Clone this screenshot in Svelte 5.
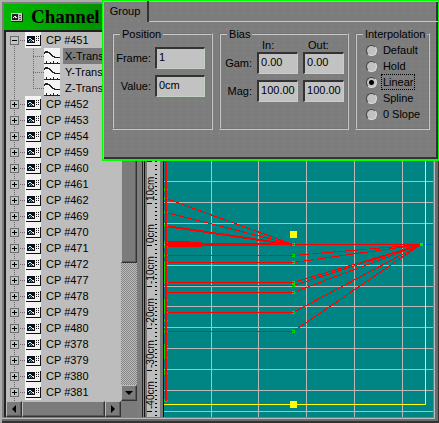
<script>
  const channels = [451, 452, 453, 454, 459, 460, 461, 462, 469, 470, 471, 472, 477, 478, 479, 480, 378, 379, 380, 381];
  const curves = ['X-Trans', 'Y-Trans', 'Z-Trans'];
  const modes = ['Default', 'Hold', 'Linear', 'Spline', '0 Slope'];
  let mode = $state('Linear');
  let frame = $state('1');
  let value = $state('0cm');
  let gamIn = $state('0.00');
  let gamOut = $state('0.00');
  let magIn = $state('100.00');
  let magOut = $state('100.00');

  const gridX = [211, 258, 306, 354, 402];
  const gridY = [160, 181, 202, 223, 244, 265, 286, 306, 327, 348, 369, 390, 411];
  const falling = [198, 212, 225];
  const levels = [255, 262, 282, 285, 292, 312, 331];
  const keys = [189, 198, 212, 225, 242, 246, 255, 262, 282, 300, 312, 320, 331, 345, 350, 357, 373, 400];
  const marks = [
    { y: 161, text: '' },
    { y: 203, text: '10cm' },
    { y: 245, text: '0cm' },
    { y: 286, text: '-10cm' },
    { y: 328, text: '-20cm' },
    { y: 370, text: '-30cm' },
    { y: 411, text: '-40cm' }
  ];
  const ticks = Array.from({ length: 62 }, (_, i) => Math.round(161 + i * 4.17));
</script>

{#snippet chanIcon()}
  <svg class="chan" width="16" height="16" viewBox="0 0 16 16" shape-rendering="crispEdges" aria-hidden="true">
    <rect width="16" height="16" fill="#f4f4f4" />
    <path d="M1 13h14V3h1v11H1z" fill="#111" />
    <rect x="2" y="4" width="8" height="7" fill="#111" />
    <path d="M3 7h1V6h2v1h1v1h2v1H7V8H6V7H4v1H3z" fill="#eee" />
    <path d="M4 9h1v1H4zM8 9h1v1H8z" fill="#e6dc50" />
    <path d="M5 8h1v1H5z" fill="#2ad" /><path d="M6 9h1v1H6z" fill="#d55" />
    <path d="M11 4h1v1h-1zM11 6h1v1h-1zM11 8h1v1h-1zM13 4h1v1h-1zM13 6h1v1h-1zM13 8h1v1h-1z" fill="#111" />
  </svg>
{/snippet}

<main class="app">
  <section class="side">
    <header>
      <svg width="12" height="9" viewBox="0 0 12 9" shape-rendering="crispEdges" aria-hidden="true">
        <rect width="12" height="9" fill="#c9c9c9" />
        <path d="M0 8h11V0h1v9H0z" fill="#222" />
        <rect x="1" y="1" width="6" height="6" fill="#222" />
        <path d="M2 4h1V3h2v1h1v1H4V4H3v1H2z" fill="#eee" />
        <path d="M8 2h2v1H8zM8 4h2v1H8zM8 6h2v1H8z" fill="#555" />
      </svg>
      <h1>Channel</h1>
    </header>
    <div class="well">
      <div class="upper">
        <ul class="tree">
          {#each channels as ch, i}
            <li>
              <div class="row">
                <button class="toggle" class:open={i === 0} aria-label={i === 0 ? 'Collapse' : 'Expand'}></button>
                <span class="stub"></span>
                {@render chanIcon()}
                <span class="name">CP #{ch}</span>
              </div>
              {#if i === 0}
                <ul class="kids">
                  {#each curves as c, j}
                    <li class="row" class:last={j === 2}>
                      <span class="branch"></span>
                      <svg width="16" height="16" viewBox="0 0 16 16" shape-rendering="crispEdges" aria-hidden="true">
                        <rect width="16" height="16" fill="#f4f4f4" />
                        <path d="M0 4h1V3h3v1h2v1h1v1h1v1h1v1h2v1h5v1h-6v-1H8v-1H7V7H6V6H5V5H1v1H0z" fill="#222" />
                        <path d="M0 15h16v1H0zM2 13h1v2H2zM6 14h1v1H6zM9 13h1v2H9zM13 14h1v1h-1z" fill="#222" />
                      </svg>
                      <span class="name" class:sel={j === 0}>{c}</span>
                    </li>
                  {/each}
                </ul>
              {/if}
            </li>
          {/each}
        </ul>
        <div class="vbar">
          <div class="thumb"></div>
          <div class="track"></div>
          <button aria-label="Scroll down"><svg width="8" height="4" viewBox="0 0 8 4"><path d="M0 0h8L4 4z" /></svg></button>
        </div>
      </div>
      <div class="hbar">
        <button aria-label="Scroll left"><svg width="4" height="8" viewBox="0 0 4 8"><path d="M4 0v8L0 4z" /></svg></button>
        <div class="thumb"></div>
        <button aria-label="Scroll right"><svg width="4" height="8" viewBox="0 0 4 8"><path d="M0 0v8l4-4z" /></svg></button>
        <div class="corner"></div>
      </div>
    </div>
  </section>

  <section class="graph">
    <svg class="ruler" width="11" viewBox="147 4 11 413" preserveAspectRatio="xMinYMin slice">
      {#each ticks as t}<rect x="155" y={t} width="2" height="1" />{/each}
      {#each marks as m}
        <rect x="147" y={m.y} width="5" height="1" />
        {#if m.text}<text transform="translate(154 {m.y - 2}) rotate(-90)">{m.text}</text>{/if}
      {/each}
    </svg>
    <svg class="plot" viewBox="164 4 269 413" preserveAspectRatio="xMinYMin slice" shape-rendering="crispEdges">
      {#each gridX as x}<rect {x} y="4" width="1" height="413" fill="#b9b9b9" />{/each}
      {#each gridY as y}<rect x="164" {y} width="269" height="1" fill="#b9b9b9" />{/each}
      <rect x="421" y="244" width="12" height="1" fill="#0060a8" />
      <path d="M425 4h1v401H164v-1h261z" fill="#ff0" />
      <g stroke="red" fill="none">
        {#each falling as y}<path d="M166 {y}.5L293 244.5" />{/each}
        <path d="M166 226.5L293 245.5" />
        {#each levels as y}<path d="M293 {y}.5L421 244.5" />{/each}
      </g>
      {#each levels as y}<rect x="166" {y} width="128" height="1" fill="red" />{/each}
      <rect x="166" y="244" width="255" height="1" fill="red" />
      <path d="M166 241h24v1h12v1h72v2h-16v1h-56v1h-36z" fill="red" />
      {#each keys as y}<path d="M164 {y - 1}h3v1h1v1h-1v1h-3z" fill="#0d0" />{/each}
      <path d="M164 300h1v14h-1zM164 347h1v12h-1zM164 370h1v4h-1zM164 262h1v22h-1z" fill="#0d0" />
      <rect x="165" y="4" width="2" height="397" fill="red" />
      {#each [244, ...levels] as y}
        <path d="M292 {y - 1}h3v3h-3z" fill="#0d0" /><path d="M292 {y}h2v1h-2z" fill="red" />
      {/each}
      <rect x="420" y="243" width="3" height="3" fill="#0e0" />
      <rect x="290" y="231" width="7" height="7" fill="#ff0" />
      <rect x="290" y="401" width="7" height="7" fill="#ff0" />
    </svg>
  </section>

  <section class="panel">
    <div class="tabs"><button class="tab">Group</button><span class="rest"></span></div>
    <form class="groups">
      <fieldset class="position">
        <legend>Position</legend>
        <div class="fields">
          <label for="frame">Frame:</label><input id="frame" bind:value={frame} />
          <label for="value">Value:</label><input id="value" bind:value />
        </div>
      </fieldset>
      <fieldset class="bias">
        <legend>Bias</legend>
        <div class="matrix">
          <span></span><span class="head">In:</span><span class="head">Out:</span>
          <label for="gam">Gam:</label><input id="gam" bind:value={gamIn} /><input aria-label="Gam out" bind:value={gamOut} />
          <label for="mag">Mag:</label><input id="mag" bind:value={magIn} /><input aria-label="Mag out" bind:value={magOut} />
        </div>
      </fieldset>
      <fieldset class="interp">
        <legend>Interpolation</legend>
        {#each modes as m}
          <label class="radio"><input type="radio" name="mode" value={m} bind:group={mode} /><span class:focus={mode === m}>{m}</span></label>
        {/each}
      </fieldset>
    </form>
  </section>
</main>

<style>
  :global(body) { background: #7d7d7d; }
  .app, .app * { box-sizing: border-box; }
  .app {
    position: relative;
    display: flex;
    min-height: 100vh;
    padding: 4px 6px 6px 4px;
    font: 11px/16px "Liberation Sans", Arial, sans-serif;
    color: #000;
    background: #7d7d7d;
    box-shadow: inset 2px 2px #a9afa9, inset -1px -2px #333, inset -4px -4px #6b6b6b, inset -5px -5px #bbb;
    overflow: hidden;
  }
  button { font: inherit; color: inherit; padding: 0; margin: 0; border: 0; border-radius: 0; display: grid; place-items: center; }
  ul { list-style: none; margin: 0; padding: 0; }
  svg { flex: none; display: block; }
  .side { width: 138px; flex: none; display: flex; flex-direction: column; }
  header { display: flex; align-items: center; height: 26px; padding-left: 7px; background: linear-gradient(90deg, #00b800, #009000 100px); }
  h1 { margin: 0 0 0 8px; font: bold 19px/26px "Liberation Serif", serif; }
  .well { flex: 1; display: flex; flex-direction: column; margin-right: 5px; border: 2px solid #222; border-width: 2px 0 0 2px; background: #bdbdbd; }
  .upper { display: flex; flex: 1; }
  .tree { flex: 1; overflow: hidden; background: repeating-linear-gradient(0deg, #6c6c6c 0 1px, transparent 1px 2px) 8px 8px / 1px 100% no-repeat; }
  .row { display: flex; align-items: center; height: 16px; padding-left: 4px; }
  .toggle { width: 9px; height: 9px; border: 1px solid #6c6c6c; background: linear-gradient(#000, #000) 50% / 5px 1px no-repeat, linear-gradient(#000, #000) 50% / 1px 5px no-repeat, #c4c4c4; }
  .toggle.open { background: linear-gradient(#000, #000) 50% / 5px 1px no-repeat, #c4c4c4; }
  .stub { width: 6px; height: 1px; background: repeating-linear-gradient(90deg, transparent 0 1px, #6c6c6c 1px 2px); }
  .name { padding: 0 2px; margin-left: 3px; white-space: nowrap; }
  .name.sel { background: #7b7b7b; flex: 1; }
  .kids .row { padding-left: 27px; }
  .branch { width: 11px; height: 16px; background: repeating-linear-gradient(0deg, #6c6c6c 0 1px, transparent 1px 2px) 0 0 / 1px 100% no-repeat, repeating-linear-gradient(90deg, #6c6c6c 0 1px, transparent 1px 2px) 0 8px / 100% 1px no-repeat; }
  .last .branch { background-size: 1px 9px, 100% 1px; }
  .vbar { width: 16px; flex: none; display: flex; flex-direction: column; }
  .vbar .thumb { flex: 230; }
  .track { flex: 122; background: conic-gradient(#bdbdbd 25%, #848484 0 50%, #bdbdbd 0 75%, #848484 0) 0 0 / 2px 2px; }
  .vbar button, .hbar button { width: 16px; height: 16px; flex: none; }
  .vbar button, .hbar button, .thumb {
    background: #7b7b7b;
    border: 1px solid #333;
    border-top-color: #bbb;
    border-left-color: #bbb;
    box-shadow: inset -1px -1px #5a5a5a;
  }
  .hbar { display: flex; height: 16px; }
  .hbar .thumb { flex: 1; }
  .corner { width: 16px; background: #7b7b7b; }

  .graph { flex: 1; display: flex; min-width: 0; padding-left: 5px; background: linear-gradient(90deg, #222 0 1px, #888 1px 2px, #111 2px 3px, #777 3px 5px, #bdbdbd 5px 18px, #777 18px 21px, #111 21px 22px) 0 0 / 22px 100% no-repeat; }
  .ruler { height: 413px; margin-right: 6px; overflow: visible; }
  .ruler text { font: 10px "Liberation Sans", Arial, sans-serif; }
  .plot { flex: 1; min-width: 0; height: 413px; background: #008484; }

  .panel {
    position: absolute;
    top: 0;
    left: 102px;
    right: 0;
    padding-bottom: 29px;
    border: 1px solid #0f0;
    border-bottom-width: 2px;
    background:
      linear-gradient(#8c8c8c, #8c8c8c) 0 0 / 1px 1px no-repeat,
      radial-gradient(circle, #848484 0 1px, transparent 1px) 0 0 / 8px 8px,
      #7d7d7d;
    box-shadow: inset 1px 1px #b5b5b5, inset -2px -2px #333;
  }
  .tabs { display: flex; height: 21px; }
  .tab { width: 46px; padding-bottom: 1px; background: none; border-right: 2px solid #333; }
  .rest { flex: 1; border-bottom: 1px solid #c4c8c4; }
  .groups { display: flex; gap: 6px; padding: 4px 8px 0 9px; }
  fieldset { margin: 0; min-width: 0; height: 104px; padding: 0; border: 2px groove #c8c8c8; }
  legend { margin-left: 6px; padding: 0 2px; line-height: 16px; }
  .position { flex: 101; }
  .bias { flex: 131; }
  .interp { flex: 74; }
  .fields { display: grid; grid-template-columns: 37px 50px; gap: 6px 4px; padding-top: 5px; align-items: center; }
  .matrix { display: grid; grid-template-columns: 31px 41px 41px; column-gap: 5px; row-gap: 6px; align-items: center; }
  .head { height: 4px; line-height: 6px; padding-left: 5px; }
  .fields label, .matrix label { text-align: right; }
  input:not([type='radio']) {
    width: 100%;
    height: 22px;
    padding: 0 0 4px 2px;
    font: inherit;
    background: #c2c2c2;
    border: 1px solid #c4d0c4;
    border-top: 2px solid #333;
    border-left: 2px solid #333;
    border-radius: 0;
    outline: 0;
  }
  .radio { display: flex; align-items: center; height: 16px; padding-left: 9px; gap: 4px; }
  .radio input {
    appearance: none;
    width: 11px;
    height: 11px;
    margin: 0;
    flex: none;
    border-radius: 50%;
    border: 1px solid;
    border-color: #444 #ddd #ddd #444;
    background: #c2c2c2;
  }
  .radio input:checked { background: radial-gradient(circle, #000 2px, #c2c2c2 3px); }
  .radio span { padding: 0 1px; line-height: 14px; border: 1px solid transparent; white-space: nowrap; }
  .radio .focus { border: 1px dotted #000; }
</style>
